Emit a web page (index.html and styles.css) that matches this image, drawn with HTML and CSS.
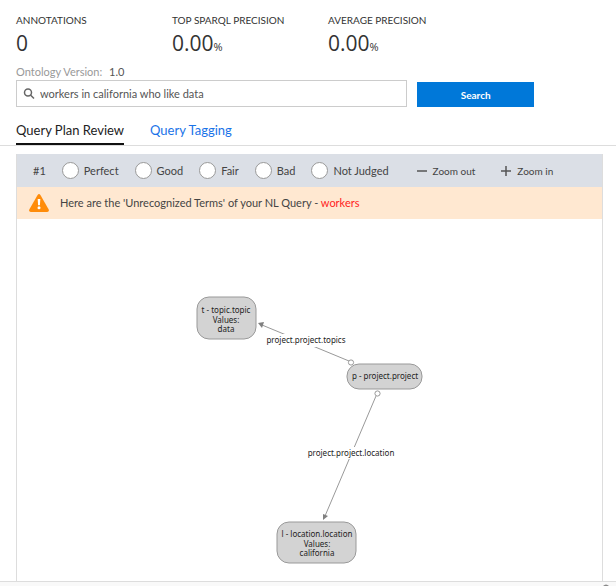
FILE: index.html
```html
<!DOCTYPE html>
<html lang="en">
<head>
<meta charset="utf-8">
<title>Query Plan Review</title>
<link rel="stylesheet" href="styles.css">
</head>
<body>
<header class="top">
  <dl class="stats">
    <div class="stat"><dt>ANNOTATIONS</dt><dd>0</dd></div>
    <div class="stat"><dt>TOP SPARQL PRECISION</dt><dd>0.00<small>%</small></dd></div>
    <div class="stat"><dt>AVERAGE PRECISION</dt><dd>0.00<small>%</small></dd></div>
  </dl>
  <p class="version">Ontology Version: <span class="version-number">1.0</span></p>
  <form class="search">
    <label class="search-box">
      <svg class="search-icon" viewBox="0 0 12 12" aria-label="Query"><circle cx="5" cy="4.500" r="3.500"/><path d="M7.500 7 11 10.500"/></svg>
      <input class="search-input" type="text" value="workers in california who like data">
    </label>
    <button class="search-button" type="button">Search</button>
  </form>
</header>
<nav class="tabs">
  <a class="tab tab-active" href="#review">Query Plan Review</a>
  <a class="tab" href="#tagging">Query Tagging</a>
</nav>
<main class="panel" id="review">
  <div class="toolbar">
    <span class="rank">#1</span>
    <label class="choice"><input type="radio" name="grade">Perfect</label>
    <label class="choice"><input type="radio" name="grade">Good</label>
    <label class="choice"><input type="radio" name="grade">Fair</label>
    <label class="choice"><input type="radio" name="grade">Bad</label>
    <label class="choice"><input type="radio" name="grade">Not Judged</label>
    <button class="zoom zoom-out" type="button"><svg class="zoom-icon" viewBox="0 0 10 10"><path d="M0 5H10"/></svg>Zoom out</button>
    <button class="zoom" type="button"><svg class="zoom-icon" viewBox="0 0 10 10"><path d="M0 5H10M5 0V10"/></svg>Zoom in</button>
  </div>
  <div class="notice">
    <svg class="notice-icon" viewBox="0 0 20 18"><path class="notice-shape" d="M8.6.9Q10-.8 11.4.9L19.7 15.5Q20.4 17.8 18.2 18H1.8Q-.4 17.8.3 15.5Z"/><path class="notice-mark" d="M8.7 5H11.3L10.9 11.2H9.1Z"/><circle class="notice-mark" cx="10" cy="13.8" r="1.5"/></svg>
    <p>Here are the 'Unrecognized Terms' of your NL Query - <span class="term">workers</span></p>
  </div>
  <svg class="graph" role="img" aria-label="Query plan graph">
    <path class="edge" d="M332 142 245 106"/>
    <path class="arrow" d="M241 104 247 103 245 109Z"/>
    <circle class="port" cx="334" cy="143.500" r="2.600"/>
    <path class="edge" d="M359 177 308 297"/>
    <path class="arrow" d="M306 301 306 295 311 297Z"/>
    <circle class="port" cx="360.500" cy="174.500" r="2.600"/>
    <rect class="label-back" x="249" y="115" width="80" height="13"/>
    <text class="graph-text" x="289" y="124">project.project.topics</text>
    <rect class="label-back" x="290" y="228" width="88" height="12"/>
    <text class="graph-text" x="334" y="237">project.project.location</text>
    <rect class="node" x="180" y="78" width="59" height="42" rx="12"/>
    <text class="graph-text" x="209" y="94">t - topic.topic</text>
    <text class="graph-text" x="209" y="104">Values:</text>
    <text class="graph-text" x="209" y="113">data</text>
    <rect class="node" x="330" y="145" width="75" height="25" rx="12"/>
    <text class="graph-text" x="368" y="160">p - project.project</text>
    <rect class="node" x="260" y="303" width="79" height="41" rx="12"/>
    <text class="graph-text" x="300" y="318">l - location.location</text>
    <text class="graph-text" x="300" y="328">Values:</text>
    <text class="graph-text" x="300" y="337">california</text>
  </svg>
</main>
<footer class="bottom"><svg class="bottom-mark" viewBox="0 0 6 2"><path d="M0 2Q3-1 6 2Z"/></svg></footer>
</body>
</html>
```
FILE: styles.css
```css
* { box-sizing: border-box; }
body {
  margin: 0;
  background: #fff;
  color: #333;
  font-family: Lato, "Open Sans", sans-serif;
  font-size: 11px;
  line-height: 16px;
}
p, dl, dd { margin: 0; }
button, input { font-family: inherit; }
.top { padding: 12px 16px 0; }
.stats { display: flex; }
.stat { flex: 0 0 156px; white-space: nowrap; }
.stat dt { font-size: 10px; line-height: 16px; }
.stat dd { font-family: "Open Sans", sans-serif; font-size: 21px; line-height: 30px; }
.stat small { font-size: 11px; }
.version { margin-top: 2px; color: #999; }
.version-number { margin-left: 4px; color: #555; }
.search { display: flex; align-items: flex-end; gap: 10px; }
.search-box {
  display: flex;
  align-items: center;
  gap: 5px;
  flex: 0 0 67%;
  height: 27px;
  padding: 0 6px;
  border: 1px solid #ccc;
}
.search-icon { width: 12px; height: 12px; fill: none; stroke: #666; stroke-width: 1.5; }
.search-input { flex: 1; min-width: 0; height: 16px; padding: 0; border: 0; outline: 0; background: none; font-size: 11px; color: #555; }
.search-button { flex: 0 0 20%; height: 25px; padding: 0; border: 0; background: #0078d9; color: #fff; font-size: 10px; font-weight: 700; }
.tabs { display: flex; gap: 26px; margin-top: 11px; padding: 0 16px; border-bottom: 1px solid #ddd; }
.tab { height: 27px; font-size: 13px; line-height: 24px; color: #1a73e8; text-decoration: none; }
.tab-active { color: #222; border-bottom: 2px solid #111; }
.panel { margin: 8px 13px 0 16px; border: 1px solid #ddd; border-width: 0 1px; }
.toolbar { display: flex; align-items: center; height: 33px; padding-left: 16px; background: #dbdfe6; color: #444; white-space: nowrap; }
.rank { margin-right: 16px; }
.choice { display: flex; align-items: center; gap: 5px; margin-right: 16px; }
.choice input { appearance: none; width: 17px; height: 17px; margin: 0; border: 1px solid #999; border-radius: 50%; background: #fff; }
.zoom { display: flex; align-items: center; gap: 6px; padding: 0; border: 0; background: none; color: #444; font-size: 10px; }
.zoom-out { margin: 0 26px 0 12px; }
.zoom-icon { width: 10px; height: 10px; fill: none; stroke: #555; stroke-width: 1.5; }
.notice { display: flex; align-items: center; gap: 11px; height: 32px; padding-left: 12px; background: #ffe8d1; color: #444; }
.notice-icon { width: 20px; height: 18px; }
.notice-shape { fill: #ff8c0a; }
.notice-mark { fill: #fff; }
.term { color: #f22; }
.graph { display: block; width: 100%; height: 362px; }
.graph-text { fill: #222; font-family: "Noto Sans", sans-serif; font-size: 8px; text-anchor: middle; }
.node { fill: #d3d3d3; stroke: #999; }
.edge { stroke: #999; }
.arrow { fill: #808080; }
.port { fill: #fff; stroke: #999; }
.label-back { fill: #fff; }
.bottom { display: flex; justify-content: flex-end; align-items: flex-end; height: 5px; padding-right: 7px; border-top: 1px solid #ddd; background: #f9f9f9; }
.bottom-mark { width: 6px; height: 2px; fill: #888; }
```
